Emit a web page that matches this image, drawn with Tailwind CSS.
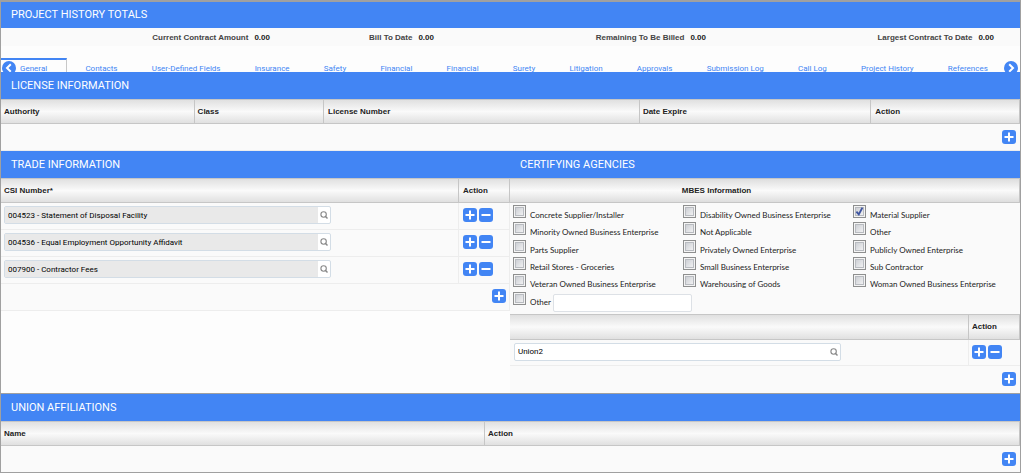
<!DOCTYPE html>
<html lang="en">

<head>
    <meta charset="UTF-8">
    <meta name="viewport" content="width=device-width, initial-scale=1.0">
    <title>Vendor Qualification</title>
    <script src="https://cdn.jsdelivr.net/npm/@tailwindcss/browser@4"></script>
</head>

<body class="bg-[#fdfdfd] font-['Roboto',sans-serif] text-[8px] leading-[10px] text-[#222]">

    <!-- Shared icons -->
    <svg class="hidden">
        <symbol id="icon-plus" viewBox="0 0 14 14">
            <rect width="14" height="14" rx="3" fill="#4285f4" />
            <path d="M7 2.5v9M2.5 7h9" stroke="#fff" stroke-width="2" />
        </symbol>
        <symbol id="icon-minus" viewBox="0 0 14 14">
            <rect width="14" height="14" rx="3" fill="#4285f4" />
            <path d="M2.5 7h9" stroke="#fff" stroke-width="2" />
        </symbol>
        <symbol id="icon-search" viewBox="0 0 8 8">
            <circle cx="3.6" cy="3.5" r="2.7" fill="none" stroke="#888" stroke-width="1.1" />
            <path d="M5.3 5.2L7.5 7.4" stroke="#888" stroke-width="1.4" />
        </symbol>
        <symbol id="icon-prev" viewBox="0 0 14 14">
            <circle cx="7" cy="7" r="7" fill="#4285f4" />
            <path d="M8.8 3.3L5 7l3.8 3.7" fill="none" stroke="#fff" stroke-width="2" />
        </symbol>
        <symbol id="icon-next" viewBox="0 0 14 14">
            <circle cx="7" cy="7" r="7" fill="#4285f4" />
            <path d="M5.2 3.3L9 7l-3.8 3.7" fill="none" stroke="#fff" stroke-width="2" />
        </symbol>
    </svg>

    <main class="border border-t-2 border-[#a0a0a0]">

        <!-- Project history totals -->
        <section>
            <h2 class="bg-[#4285f4] px-[10px] text-[11px] leading-[26px] text-white">PROJECT HISTORY TOTALS</h2>
            <dl class="grid h-[18px] grid-cols-[269fr_164fr_272fr_288fr] bg-[#fafafa] pt-px pr-[26px] font-['Liberation_Sans',sans-serif] font-bold leading-[18px] text-[#444]">
                <div class="flex justify-end gap-[6px]"><dt>Current Contract Amount</dt><dd class="text-[#222]">0.00</dd></div>
                <div class="flex justify-end gap-[6px]"><dt>Bill To Date</dt><dd class="text-[#222]">0.00</dd></div>
                <div class="flex justify-end gap-[6px]"><dt>Remaining To Be Billed</dt><dd class="text-[#222]">0.00</dd></div>
                <div class="flex justify-end gap-[6px]"><dt>Largest Contract To Date</dt><dd class="text-[#222]">0.00</dd></div>
            </dl>
        </section>

        <!-- Tabs, cut off by the section below -->
        <nav class="relative mt-3 h-[14px] overflow-hidden text-[#4285f4]">
            <ul class="flex justify-between whitespace-nowrap pr-4 leading-[22px]">
                <li><a href="#" class="block border-t-2 border-r border-t-[#4285f4] border-r-[#c8c8c8] pr-[19px] pl-[19px] leading-[18px]">General</a></li>
                <li class="px-4"><a href="#">Contacts</a></li>
                <li class="px-4"><a href="#">User-Defined Fields</a></li>
                <li class="px-4"><a href="#">Insurance</a></li>
                <li class="px-4"><a href="#">Safety</a></li>
                <li class="px-4"><a href="#">Financial</a></li>
                <li class="px-4"><a href="#">Financial</a></li>
                <li class="px-4"><a href="#">Surety</a></li>
                <li class="px-4"><a href="#">Litigation</a></li>
                <li class="px-4"><a href="#">Approvals</a></li>
                <li class="px-4"><a href="#">Submission Log</a></li>
                <li class="px-4"><a href="#">Call Log</a></li>
                <li class="px-4"><a href="#">Project History</a></li>
                <li class="px-4"><a href="#">References</a></li>
            </ul>
            <button type="button" aria-label="Previous tabs" class="absolute top-[3px] left-px"><svg class="size-[14px]"><use href="#icon-prev" /></svg></button>
            <button type="button" aria-label="Next tabs" class="absolute top-[3px] right-[2px]"><svg class="size-[14px]"><use href="#icon-next" /></svg></button>
        </nav>

        <!-- License information -->
        <section>
            <h2 class="bg-[#4285f4] px-[10px] text-[11px] leading-[27px] text-white">LICENSE INFORMATION</h2>
            <table class="w-full table-fixed border-separate border-spacing-0 bg-[#fafafa]">
                <thead>
                    <tr class="h-[25px] bg-linear-to-b from-[#dedede] via-[#fafafa] to-[#dedede] text-left font-['Liberation_Sans',sans-serif]">
                        <th class="w-[19%] border-y border-r border-[#c6c6c6] px-[3px]">Authority</th>
                        <th class="w-[12.7%] border-y border-r border-[#c6c6c6] px-[3px]">Class</th>
                        <th class="w-[31%] border-y border-r border-[#c6c6c6] px-1">License Number</th>
                        <th class="w-[22.7%] border-y border-r border-[#c6c6c6] px-[3px]">Date Expire</th>
                        <th class="border-y border-r border-[#c6c6c6] px-1">Action</th>
                    </tr>
                </thead>
                <tbody>
                    <tr class="h-[27px]">
                        <td colspan="5" class="border-b border-[#ededed] pr-1">
                            <button type="button" aria-label="Add license" class="ml-auto block"><svg class="size-[14px]"><use href="#icon-plus" /></svg></button>
                        </td>
                    </tr>
                </tbody>
            </table>
        </section>

        <div class="grid grid-cols-[509fr_510fr]">
            <!-- Trade information -->
            <section>
                <h2 class="bg-[#4285f4] px-[10px] text-[11px] leading-[27px] text-white">TRADE INFORMATION</h2>
                <table class="w-full table-fixed border-separate border-spacing-0 bg-[#fafafa]">
                    <thead>
                        <tr class="h-[25px] bg-linear-to-b from-[#dedede] via-[#fafafa] to-[#dedede] text-left font-['Liberation_Sans',sans-serif]">
                            <th class="border-y border-r border-[#c6c6c6] px-[3px]">CSI Number*</th>
                            <th class="w-[51px] border-y border-r border-[#c6c6c6] px-1">Action</th>
                        </tr>
                    </thead>
                    <tbody>
                        <tr class="h-[27px]">
                            <td class="border-r border-b border-[#ededed] px-[3px] pb-[2px]">
                                <div class="flex h-[18px] w-[327px] rounded-xs border border-[#d3dde6] bg-white">
                                    <input type="text" readonly aria-label="CSI number 1" value="004523 - Statement of Disposal Facility" class="min-w-0 flex-1 bg-[#e9e9e9] px-[3px] pt-px text-black">
                                    <button type="button" aria-label="Search CSI number 1" class="px-[2px]"><svg class="size-2"><use href="#icon-search" /></svg></button>
                                </div>
                            </td>
                            <td class="border-r border-b border-[#ededed] px-1 pb-[2px]">
                                <div class="flex gap-[2px]">
                                    <button type="button" aria-label="Add row"><svg class="size-[14px]"><use href="#icon-plus" /></svg></button>
                                    <button type="button" aria-label="Remove row"><svg class="size-[14px]"><use href="#icon-minus" /></svg></button>
                                </div>
                            </td>
                        </tr>
                        <tr class="h-[27px]">
                            <td class="border-r border-b border-[#ededed] px-[3px] pb-[2px]">
                                <div class="flex h-[18px] w-[327px] rounded-xs border border-[#d3dde6] bg-white">
                                    <input type="text" readonly aria-label="CSI number 2" value="004536 - Equal Employment Opportunity Affidavit" class="min-w-0 flex-1 bg-[#e9e9e9] px-[3px] pt-px text-black">
                                    <button type="button" aria-label="Search CSI number 2" class="px-[2px]"><svg class="size-2"><use href="#icon-search" /></svg></button>
                                </div>
                            </td>
                            <td class="border-r border-b border-[#ededed] px-1 pb-[2px]">
                                <div class="flex gap-[2px]">
                                    <button type="button" aria-label="Add row"><svg class="size-[14px]"><use href="#icon-plus" /></svg></button>
                                    <button type="button" aria-label="Remove row"><svg class="size-[14px]"><use href="#icon-minus" /></svg></button>
                                </div>
                            </td>
                        </tr>
                        <tr class="h-[27px]">
                            <td class="border-r border-b border-[#ededed] px-[3px] pb-[2px]">
                                <div class="flex h-[18px] w-[327px] rounded-xs border border-[#d3dde6] bg-white">
                                    <input type="text" readonly aria-label="CSI number 3" value="007900 - Contractor Fees" class="min-w-0 flex-1 bg-[#e9e9e9] px-[3px] pt-px text-black">
                                    <button type="button" aria-label="Search CSI number 3" class="px-[2px]"><svg class="size-2"><use href="#icon-search" /></svg></button>
                                </div>
                            </td>
                            <td class="border-r border-b border-[#ededed] px-1 pb-[2px]">
                                <div class="flex gap-[2px]">
                                    <button type="button" aria-label="Add row"><svg class="size-[14px]"><use href="#icon-plus" /></svg></button>
                                    <button type="button" aria-label="Remove row"><svg class="size-[14px]"><use href="#icon-minus" /></svg></button>
                                </div>
                            </td>
                        </tr>
                        <tr class="h-[27px]">
                            <td colspan="2" class="border-r border-b border-[#ededed] pr-[3px] pb-[2px]">
                                <button type="button" aria-label="Add CSI number" class="ml-auto block"><svg class="size-[14px]"><use href="#icon-plus" /></svg></button>
                            </td>
                        </tr>
                    </tbody>
                </table>
            </section>

            <!-- Certifying agencies -->
            <section class="bg-[#fafafa]">
                <h2 class="bg-[#4285f4] px-[10px] text-[11px] leading-[27px] text-white">CERTIFYING AGENCIES</h2>
                <fieldset>
                    <legend class="block h-[25px] w-full border-y border-r border-[#c6c6c6] bg-linear-to-b from-[#dedede] via-[#fafafa] to-[#dedede] pr-24 text-center font-['Liberation_Sans',sans-serif] leading-[23px] font-bold">MBES Information</legend>
                    <div class="grid h-[111px] grid-cols-[170fr_170fr_167fr] grid-rows-6 items-start pt-[2px] pb-[5px] pl-[3px] font-['Lato',sans-serif]">
                        <label class="flex gap-1 leading-[21px]"><input type="checkbox" class="size-[13px] shrink-0 appearance-none border border-[#8e8f8f] bg-linear-to-br from-[#c4c7cd] to-[#fafafa] shadow-[inset_0_0_0_1px_#f4f4f4,inset_0_0_0_2px_#b8bbc0]">Concrete Supplier/Installer</label>
                        <label class="flex gap-1 leading-[21px]"><input type="checkbox" class="size-[13px] shrink-0 appearance-none border border-[#8e8f8f] bg-linear-to-br from-[#c4c7cd] to-[#fafafa] shadow-[inset_0_0_0_1px_#f4f4f4,inset_0_0_0_2px_#b8bbc0]">Disability Owned Business Enterprise</label>
                        <label class="flex gap-1 leading-[21px]">
                            <span class="relative size-[13px] shrink-0">
                                <input type="checkbox" checked class="peer block size-[13px] appearance-none border border-[#8e8f8f] bg-linear-to-br from-[#c4c7cd] to-[#fafafa] shadow-[inset_0_0_0_1px_#f4f4f4,inset_0_0_0_2px_#b8bbc0]">
                                <svg viewBox="0 0 13 13" class="pointer-events-none absolute inset-0 hidden peer-checked:block"><path d="M3.4 6.6L5.8 9.4L9.4 2.6" fill="none" stroke="#3f55a0" stroke-width="1.9" /></svg>
                            </span>Material Supplier</label>
                        <label class="flex gap-1 leading-[21px]"><input type="checkbox" class="size-[13px] shrink-0 appearance-none border border-[#8e8f8f] bg-linear-to-br from-[#c4c7cd] to-[#fafafa] shadow-[inset_0_0_0_1px_#f4f4f4,inset_0_0_0_2px_#b8bbc0]">Minority Owned Business Enterprise</label>
                        <label class="flex gap-1 leading-[21px]"><input type="checkbox" class="size-[13px] shrink-0 appearance-none border border-[#8e8f8f] bg-linear-to-br from-[#c4c7cd] to-[#fafafa] shadow-[inset_0_0_0_1px_#f4f4f4,inset_0_0_0_2px_#b8bbc0]">Not Applicable</label>
                        <label class="flex gap-1 leading-[21px]"><input type="checkbox" class="size-[13px] shrink-0 appearance-none border border-[#8e8f8f] bg-linear-to-br from-[#c4c7cd] to-[#fafafa] shadow-[inset_0_0_0_1px_#f4f4f4,inset_0_0_0_2px_#b8bbc0]">Other</label>
                        <label class="flex gap-1 leading-[21px]"><input type="checkbox" class="size-[13px] shrink-0 appearance-none border border-[#8e8f8f] bg-linear-to-br from-[#c4c7cd] to-[#fafafa] shadow-[inset_0_0_0_1px_#f4f4f4,inset_0_0_0_2px_#b8bbc0]">Parts Supplier</label>
                        <label class="flex gap-1 leading-[21px]"><input type="checkbox" class="size-[13px] shrink-0 appearance-none border border-[#8e8f8f] bg-linear-to-br from-[#c4c7cd] to-[#fafafa] shadow-[inset_0_0_0_1px_#f4f4f4,inset_0_0_0_2px_#b8bbc0]">Privately Owned Enterprise</label>
                        <label class="flex gap-1 leading-[21px]"><input type="checkbox" class="size-[13px] shrink-0 appearance-none border border-[#8e8f8f] bg-linear-to-br from-[#c4c7cd] to-[#fafafa] shadow-[inset_0_0_0_1px_#f4f4f4,inset_0_0_0_2px_#b8bbc0]">Publicly Owned Enterprise</label>
                        <label class="flex gap-1 leading-[21px]"><input type="checkbox" class="size-[13px] shrink-0 appearance-none border border-[#8e8f8f] bg-linear-to-br from-[#c4c7cd] to-[#fafafa] shadow-[inset_0_0_0_1px_#f4f4f4,inset_0_0_0_2px_#b8bbc0]">Retail Stores - Groceries</label>
                        <label class="flex gap-1 leading-[21px]"><input type="checkbox" class="size-[13px] shrink-0 appearance-none border border-[#8e8f8f] bg-linear-to-br from-[#c4c7cd] to-[#fafafa] shadow-[inset_0_0_0_1px_#f4f4f4,inset_0_0_0_2px_#b8bbc0]">Small Business Enterprise</label>
                        <label class="flex gap-1 leading-[21px]"><input type="checkbox" class="size-[13px] shrink-0 appearance-none border border-[#8e8f8f] bg-linear-to-br from-[#c4c7cd] to-[#fafafa] shadow-[inset_0_0_0_1px_#f4f4f4,inset_0_0_0_2px_#b8bbc0]">Sub Contractor</label>
                        <label class="flex gap-1 leading-[21px]"><input type="checkbox" class="size-[13px] shrink-0 appearance-none border border-[#8e8f8f] bg-linear-to-br from-[#c4c7cd] to-[#fafafa] shadow-[inset_0_0_0_1px_#f4f4f4,inset_0_0_0_2px_#b8bbc0]">Veteran Owned Business Enterprise</label>
                        <label class="flex gap-1 leading-[21px]"><input type="checkbox" class="size-[13px] shrink-0 appearance-none border border-[#8e8f8f] bg-linear-to-br from-[#c4c7cd] to-[#fafafa] shadow-[inset_0_0_0_1px_#f4f4f4,inset_0_0_0_2px_#b8bbc0]">Warehousing of Goods</label>
                        <label class="flex gap-1 leading-[21px]"><input type="checkbox" class="size-[13px] shrink-0 appearance-none border border-[#8e8f8f] bg-linear-to-br from-[#c4c7cd] to-[#fafafa] shadow-[inset_0_0_0_1px_#f4f4f4,inset_0_0_0_2px_#b8bbc0]">Woman Owned Business Enterprise</label>
                        <div class="col-span-2 flex items-start gap-[2px]">
                            <label class="flex gap-1 leading-[21px]"><input type="checkbox" class="size-[13px] shrink-0 appearance-none border border-[#8e8f8f] bg-linear-to-br from-[#c4c7cd] to-[#fafafa] shadow-[inset_0_0_0_1px_#f4f4f4,inset_0_0_0_2px_#b8bbc0]">Other</label>
                            <input type="text" aria-label="Other agency" class="mt-[2px] h-[18px] w-[139px] rounded-xs border border-[#dde1e6] bg-white px-[3px]">
                        </div>
                    </div>
                </fieldset>
                <table class="w-full table-fixed border-separate border-spacing-0">
                    <thead>
                        <tr class="h-[26px] bg-linear-to-b from-[#dedede] via-[#fafafa] to-[#dedede] text-left font-['Liberation_Sans',sans-serif]">
                            <th class="border-y border-r border-[#c6c6c6]"></th>
                            <th class="w-[51px] border-y border-r border-[#c6c6c6] px-[3px]">Action</th>
                        </tr>
                    </thead>
                    <tbody>
                        <tr class="h-[26px]">
                            <td class="border-r border-b border-[#ededed] px-1 pb-px">
                                <div class="flex h-[18px] w-[327px] rounded-xs border border-[#d3dde6] bg-white">
                                    <input type="text" aria-label="Union" value="Union2" class="min-w-0 flex-1 px-[3px] text-black">
                                    <button type="button" aria-label="Search union" class="px-[2px]"><svg class="size-2"><use href="#icon-search" /></svg></button>
                                </div>
                            </td>
                            <td class="border-b border-[#ededed] px-[3px] pb-px">
                                <div class="flex gap-[2px]">
                                    <button type="button" aria-label="Add row"><svg class="size-[14px]"><use href="#icon-plus" /></svg></button>
                                    <button type="button" aria-label="Remove row"><svg class="size-[14px]"><use href="#icon-minus" /></svg></button>
                                </div>
                            </td>
                        </tr>
                        <tr class="h-[27px]">
                            <td colspan="2" class="pr-1 pb-px">
                                <button type="button" aria-label="Add union" class="ml-auto block"><svg class="size-[14px]"><use href="#icon-plus" /></svg></button>
                            </td>
                        </tr>
                    </tbody>
                </table>
            </section>
        </div>

        <!-- Union affiliations -->
        <section>
            <h2 class="border-t border-[#a0a0a0] bg-[#4285f4] px-[10px] text-[11px] leading-[27px] text-white">UNION AFFILIATIONS</h2>
            <table class="w-full table-fixed border-separate border-spacing-0 bg-[#fafafa]">
                <thead>
                    <tr class="h-[25px] bg-linear-to-b from-[#dedede] via-[#fafafa] to-[#dedede] text-left font-['Liberation_Sans',sans-serif]">
                        <th class="w-[47.5%] border-y border-r border-[#c6c6c6] px-[3px]">Name</th>
                        <th class="border-y border-r border-[#c6c6c6] px-[3px]">Action</th>
                    </tr>
                </thead>
                <tbody>
                    <tr class="h-[26px]">
                        <td colspan="2" class="pr-1">
                            <button type="button" aria-label="Add affiliation" class="ml-auto block"><svg class="size-[14px]"><use href="#icon-plus" /></svg></button>
                        </td>
                    </tr>
                </tbody>
            </table>
        </section>
    </main>

</body>

</html>
